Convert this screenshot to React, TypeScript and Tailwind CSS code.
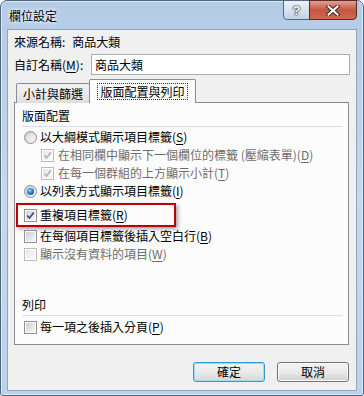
import React from 'react';

function Key({ k }: { k: string }) {
  return (
    <>
      (<span className="underline underline-offset-[2px]">{k}</span>)
    </>
  );
}

function CheckBox({ checked, disabled }: { checked?: boolean; disabled?: boolean }) {
  return (
    <span
      className={`flex h-[13px] w-[13px] shrink-0 items-center justify-center border bg-white p-[1px] ${
        disabled ? 'border-[#bcbcbc]' : 'border-[#8e8f8f]'
      }`}
    >
      <span
        className={`flex h-full w-full items-center justify-center ${
          disabled
            ? 'bg-gradient-to-br from-[#e6e6e6] to-[#fbfbfb]'
            : 'bg-gradient-to-br from-[#cbcfd5] to-[#f7f7f7]'
        }`}
      >
        {checked && (
          <svg width="9" height="9" viewBox="0 0 9 9">
            <path
              d="M1.3 4.6 L3.5 7 L7.8 1.4"
              fill="none"
              stroke={disabled ? '#b4b4b4' : '#3c4d8f'}
              strokeWidth="1.7"
            />
          </svg>
        )}
      </span>
    </span>
  );
}

function Radio({ checked }: { checked?: boolean }) {
  return (
    <span className="flex h-[13px] w-[13px] shrink-0 items-center justify-center rounded-full border border-[#8e8f8f] bg-gradient-to-br from-[#c9ccd2] to-[#f8f8f8]">
      {checked ? (
        <span className="h-[7px] w-[7px] rounded-full bg-[radial-gradient(circle_at_40%_35%,#9ae6ff_0%,#2d8bd3_40%,#0b3f86_100%)]" />
      ) : (
        <span className="h-[7px] w-[7px] rounded-full bg-gradient-to-br from-[#dcdcdc] to-[#f4f4f4]" />
      )}
    </span>
  );
}

export default function App() {
  return (
    <div className="h-[396px] w-[364px] bg-white font-['Noto_Sans_CJK_TC','Liberation_Sans',sans-serif] text-[12px] leading-[16px] text-black">
      <div className="flex h-full flex-col rounded-t-[7px] rounded-b-[3px] border border-[#4f6780] bg-gradient-to-b from-[#b4cbe6] via-[#c4d8ef] to-[#bcd3ee] px-[6px] pb-[4px] shadow-[inset_0_0_0_1px_#dce9f7]">
        {/* Title bar */}
        <div className="flex h-[28px] items-start justify-between">
          <span className="ml-[2px] mt-[7px] [text-shadow:0_0_6px_#ffffff,0_0_3px_#ffffff]">欄位設定</span>
          <div className="-mt-px flex">
            <div className="flex h-[20px] w-[27px] items-center justify-center rounded-bl-[4px] border border-[#55677f] bg-gradient-to-b from-[#eef3f9] via-[#d7e2ef] to-[#c3d3e6]">
              <span className="font-['Liberation_Sans',sans-serif] text-[13px] font-bold leading-none text-white [text-shadow:0_0_1px_#1e2a3a,0_0_1px_#1e2a3a,0_0_2px_#1e2a3a]">
                ?
              </span>
            </div>
            <div className="-ml-px flex h-[20px] w-[48px] items-center justify-center rounded-br-[4px] border border-[#5b2a25] bg-gradient-to-b from-[#dfa093] via-[#c55540] to-[#d06a52]">
              <svg width="14" height="11" viewBox="0 0 14 11">
                <path d="M2.5 1.5 L11.5 9.5 M11.5 1.5 L2.5 9.5" stroke="#3a1b17" strokeWidth="4" strokeLinecap="square" />
                <path d="M2.5 1.5 L11.5 9.5 M11.5 1.5 L2.5 9.5" stroke="#ffffff" strokeWidth="2.2" strokeLinecap="square" />
              </svg>
            </div>
          </div>
        </div>

        {/* Client area */}
        <div className="flex flex-1 flex-col border border-[#8ea5be] bg-[#f0f0f0] px-[6px]">
          <div className="mt-[4px] flex h-[16px] items-center">
            <span>來源名稱:</span>
            <span className="ml-[7px]">商品大類</span>
          </div>

          <div className="mt-[4px] flex h-[21px] items-center">
            <span className="w-[77px]">
              自訂名稱<Key k="M" />:
            </span>
            <div className="flex h-[21px] flex-1 items-center border border-[#abadb3] bg-white pl-[3px]">
              商品大類
            </div>
          </div>

          {/* Tabs */}
          <div className="relative z-10 mt-[5px] flex h-[23px] items-end">
            <div className="ml-[2px] flex h-[20px] w-[74px] items-center justify-center rounded-t-[2px] border border-b-0 border-[#898c95] bg-gradient-to-b from-[#f2f2f2] via-[#ebebeb] to-[#dddddd]">
              小計與篩選
            </div>
            <div className="-ml-px flex h-[24px] w-[107px] items-center justify-center rounded-t-[2px] border border-b-0 border-[#898c95] bg-[#fcfcfc] pb-[1px]">
              <span className="border border-dotted border-[#333333] px-[2px] leading-[15px]">版面配置與列印</span>
            </div>
          </div>

          <div className="-mt-px mr-[1px] flex h-[243px] flex-col border border-[#898c95] bg-[#fcfcfc] pl-[7px] pr-[6px]">
            <div className="mt-[5px] h-[16px]">版面配置</div>
            <div className="mt-[2px] h-px bg-[#d5dfe5]" />

            <div className="ml-[2px] mt-[1px] flex h-[18px] items-center gap-[3px]">
              <Radio />
              <span>
                以大綱模式顯示項目標籤<Key k="S" />
              </span>
            </div>
            <div className="ml-[19px] flex h-[18px] items-center gap-[4px] text-[#6d6d6d]">
              <CheckBox checked disabled />
              <span>
                在相同欄中顯示下一個欄位的標籤 (壓縮表單)<Key k="D" />
              </span>
            </div>
            <div className="ml-[19px] flex h-[18px] items-center gap-[4px] text-[#6d6d6d]">
              <CheckBox checked disabled />
              <span>
                在每一個群組的上方顯示小計<Key k="T" />
              </span>
            </div>
            <div className="ml-[2px] flex h-[18px] items-center gap-[3px]">
              <Radio checked />
              <span>
                以列表方式顯示項目標籤<Key k="I" />
              </span>
            </div>

            <div className="-ml-[6px] mt-[3px] flex h-[24px] w-[160px] items-center gap-[3px] border-2 border-[#c00000] pl-[6px] shadow-[2px_2px_4px_rgba(0,0,0,0.35)]">
              <CheckBox checked />
              <span>
                重複項目標籤<Key k="R" />
              </span>
            </div>

            <div className="ml-[2px] flex h-[18px] items-center gap-[3px]">
              <CheckBox />
              <span>
                在每個項目標籤後插入空白行<Key k="B" />
              </span>
            </div>
            <div className="ml-[2px] flex h-[18px] items-center gap-[3px] text-[#6d6d6d]">
              <CheckBox disabled />
              <span>
                顯示沒有資料的項目<Key k="W" />
              </span>
            </div>

            <div className="mt-[34px] h-[16px]">列印</div>
            <div className="mt-[2px] h-px bg-[#d5dfe5]" />
            <div className="ml-[2px] mt-[2px] flex h-[18px] items-center gap-[3px]">
              <CheckBox />
              <span>
                每一項之後插入分頁<Key k="P" />
              </span>
            </div>
          </div>

          {/* Buttons */}
          <div className="mr-[1px] mt-[17px] flex justify-end gap-[12px]">
            <button className="flex h-[20px] w-[72px] items-center justify-center rounded-[3px] border border-[#3399cc] bg-gradient-to-b from-[#f2f2f2] via-[#ebebeb] to-[#d6d6d6] shadow-[inset_0_0_0_1px_#9fdcf5]">
              確定
            </button>
            <button className="flex h-[20px] w-[72px] items-center justify-center rounded-[3px] border border-[#707070] bg-gradient-to-b from-[#f2f2f2] via-[#ebebeb] to-[#cfcfcf] shadow-[inset_0_0_0_1px_#fcfcfc]">
              取消
            </button>
          </div>
        </div>
      </div>
    </div>
  );
}
